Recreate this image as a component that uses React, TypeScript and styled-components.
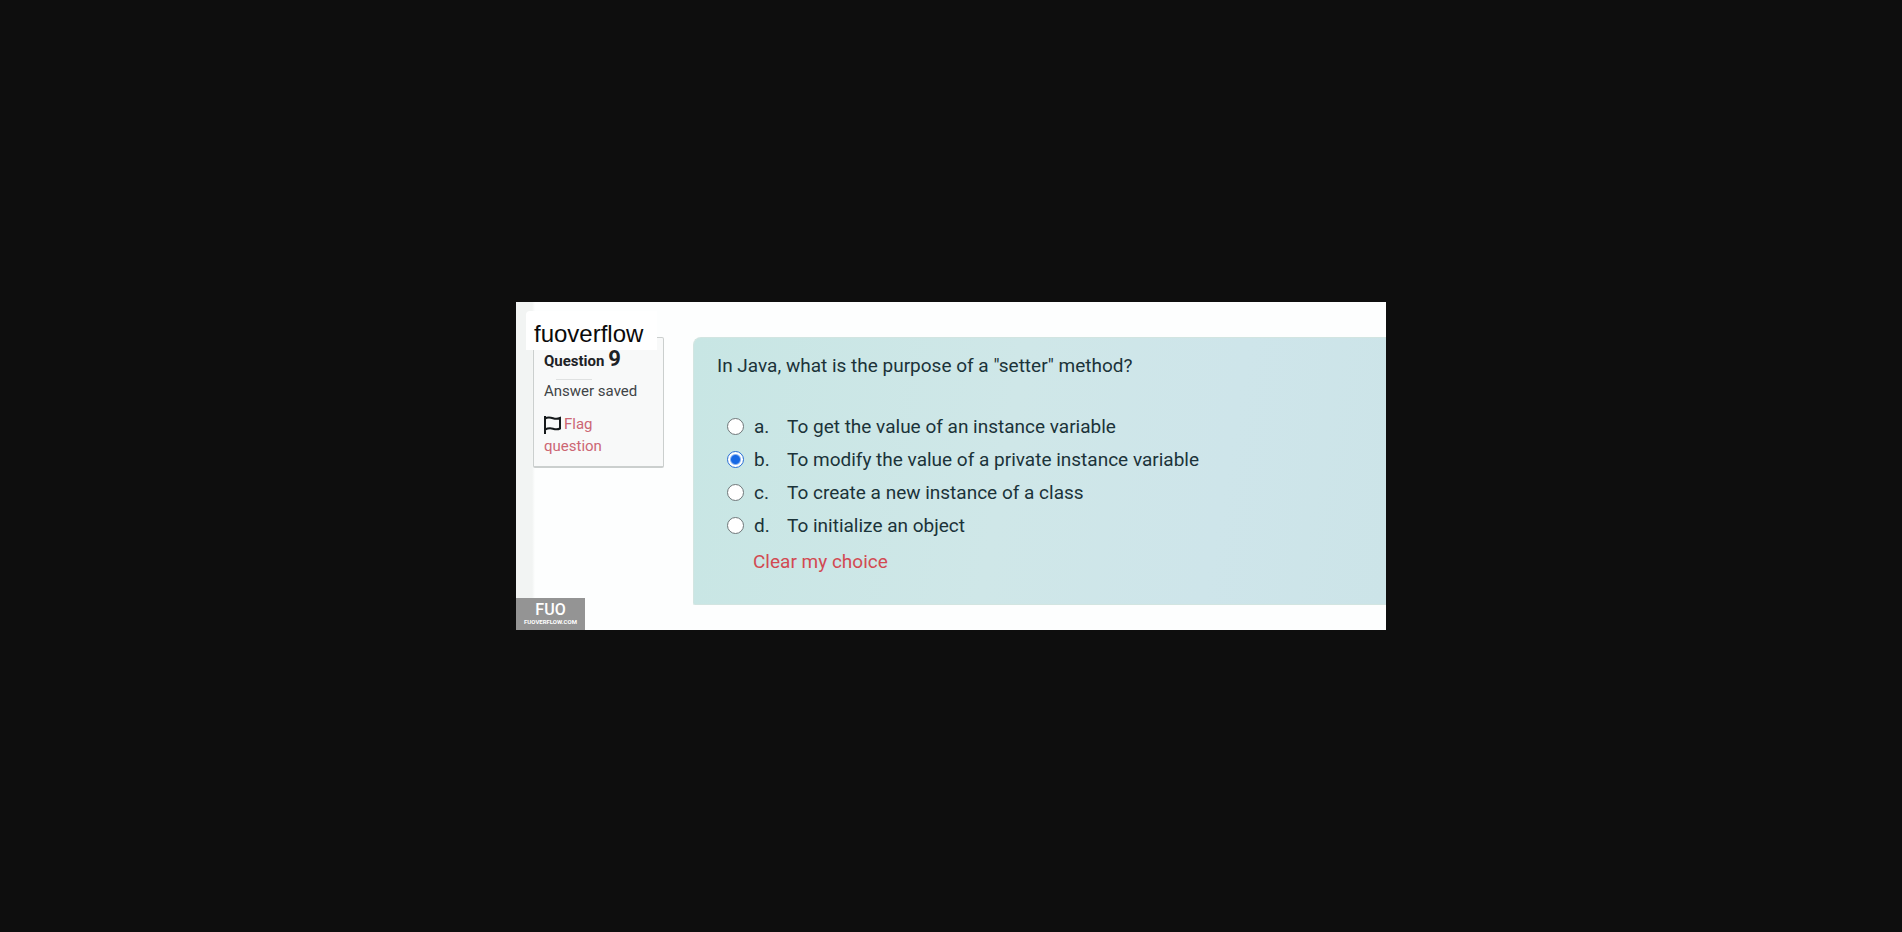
import React, { useState } from "react";
import styled, { createGlobalStyle } from "styled-components";

const GlobalStyle = createGlobalStyle`
  *, *::before, *::after { box-sizing: border-box; }
  body {
    margin: 0;
    background: #0e0e0e;
    font-family: Roboto, "Liberation Sans", sans-serif;
  }
`;

const Page = styled.main`
  min-height: 100vh;
  display: flex;
  align-items: center;
  justify-content: center;
`;

const Sheet = styled.section`
  position: relative;
  display: flex;
  align-items: flex-start;
  gap: 29px;
  width: 100%;
  max-width: 870px;
  padding: 35px 0 25px 17px;
  background: linear-gradient(90deg, #f2f4f3 16px, #fdfefe 19px);
`;

const SiteLabel = styled.div`
  position: absolute;
  top: 9px;
  left: 10px;
  padding: 9px 14px 2px 8px;
  border-radius: 4px 0 0 0;
  background: #ffffff;
  color: #0a0a0a;
  font-family: "Liberation Sans", sans-serif;
  font-size: 24px;
  line-height: 28px;
`;

const InfoCard = styled.aside`
  flex: 0 0 131px;
  padding: 9px 10px;
  border: 1px solid #cbcfce;
  border-bottom-width: 2px;
  border-radius: 2px;
  background: #f8f9f9;
  font-size: 15px;
  line-height: 22px;
`;

const QuestionTitle = styled.h1`
  margin: 0;
  color: #1d2125;
  font-size: 15px;
  font-weight: 700;
  line-height: 24px;
`;

const QuestionNumber = styled.span`
  font-size: 22px;
  line-height: 24px;
`;

const Divider = styled.hr`
  width: 36px;
  margin: 6px 0 0 12px;
  border: 0;
  border-top: 1px solid #dfe1e1;
`;

const State = styled.p`
  margin: 0 0 11px;
  color: #3f4446;
`;

const FlagLink = styled.a`
  display: block;
  color: #cc6673;
  text-decoration: none;
`;

const FlagIcon = styled.svg`
  width: 18px;
  height: 18px;
  margin-right: 2px;
  vertical-align: -5px;
`;

const QuestionPanel = styled.form`
  flex: 1;
  min-width: 0;
  padding: 16px 23px 30px;
  border: 1px solid #d2e5e1;
  border-right: 0;
  border-radius: 8px 0 0 2px;
  background: linear-gradient(100deg, #c8e6e4 0%, #cfe7e8 45%, #cee5ea 75%, #cce4e8 100%);
  color: #1b3339;
  font-size: 19px;
  line-height: 24px;
`;

const Options = styled.fieldset`
  margin: 0;
  padding: 0 0 0 10px;
  border: 0;
`;

const Prompt = styled.legend`
  margin-left: -10px;
  padding: 0 0 32px;
`;

const Option = styled.label`
  display: grid;
  grid-template-columns: 27px 33px 1fr;
  align-items: center;
  line-height: 33px;
`;

const Radio = styled.input`
  appearance: none;
  width: 17px;
  height: 17px;
  margin: 0;
  border: 1px solid #6f7779;
  border-radius: 50%;
  background: #ffffff;

  &:checked {
    border-color: #2a6fd6;
    background: radial-gradient(circle, #1768e4 4px, #ffffff 6px);
  }
`;

const ClearButton = styled.button`
  display: block;
  margin: 8px 0 0 36px;
  padding: 0;
  border: 0;
  background: none;
  color: #d24a52;
  font: inherit;
`;

const Watermark = styled.div`
  position: absolute;
  left: 0;
  bottom: 0;
  display: flex;
  flex-direction: column;
  align-items: center;
  width: 69px;
  padding: 4px 0;
  background: #949494;
  color: #ffffff;
  font-weight: 700;
`;

const WatermarkName = styled.span`
  font-size: 16px;
  font-weight: 500;
  line-height: 16px;
`;

const WatermarkSite = styled.span`
  font-size: 6px;
  line-height: 8px;
`;

const answers = [
  { letter: "a.", text: "To get the value of an instance variable" },
  { letter: "b.", text: "To modify the value of a private instance variable" },
  { letter: "c.", text: "To create a new instance of a class" },
  { letter: "d.", text: "To initialize an object" },
];

export default function App() {
  const [choice, setChoice] = useState<string | null>("b.");

  return (
    <>
      <GlobalStyle />
      <Page>
        <Sheet>
          <InfoCard>
            <QuestionTitle>
              Question <QuestionNumber>9</QuestionNumber>
            </QuestionTitle>
            <Divider />
            <State>Answer saved</State>
            <FlagLink href="#flag">
              <FlagIcon viewBox="0 0 18 18" fill="none" stroke="#15191b" strokeWidth="2" aria-hidden="true">
                <path d="M1 0V18M1 2.500C4 1 6.500 1.500 9 2.300S14 3 16 2V12.500C13.500 13.800 11.500 13.500 9 12.700S4 12 1 13.500" />
              </FlagIcon>
              Flag question
            </FlagLink>
          </InfoCard>
          <QuestionPanel>
            <Options>
              <Prompt>In Java, what is the purpose of a "setter" method?</Prompt>
              {answers.map(({ letter, text }) => (
                <Option key={letter}>
                  <Radio
                    type="radio"
                    name="answer"
                    checked={choice === letter}
                    onChange={() => setChoice(letter)}
                  />
                  <span>{letter}</span>
                  <span>{text}</span>
                </Option>
              ))}
            </Options>
            <ClearButton type="button" onClick={() => setChoice(null)}>
              Clear my choice
            </ClearButton>
          </QuestionPanel>
          <SiteLabel>fuoverflow</SiteLabel>
          <Watermark>
            <WatermarkName>FUO</WatermarkName>
            <WatermarkSite>FUOVERFLOW.COM</WatermarkSite>
          </Watermark>
        </Sheet>
      </Page>
    </>
  );
}
